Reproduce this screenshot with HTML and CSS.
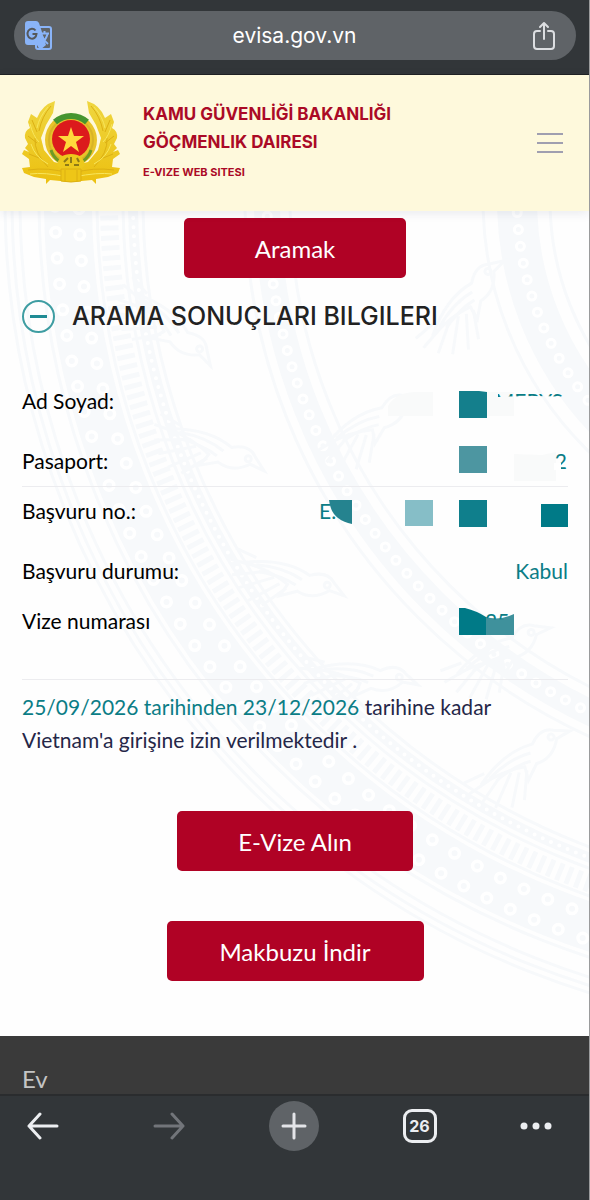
FILE: index.html
```html
<!DOCTYPE html>
<html lang="tr">
<head>
    <meta charset="UTF-8">
    <meta name="viewport" content="width=device-width, initial-scale=1.0">
    <title>evisa.gov.vn</title>
    <link rel="stylesheet" href="styles.css">
</head>
<body>

    <div class="browser-top">
        <div class="address-bar">
            <button class="icon-button translate" aria-label="Google Translate">
                <svg width="28" height="30" viewBox="0 0 28 30">
                    <rect x="11" y="6" width="15" height="22" rx="2" fill="none" stroke="#8ab4f8" stroke-width="2"/>
                    <path d="M3 0h8q2 0 3 2l2 6 5 16-6 5-3-5H3q-3 0-3-3V3q0-3 3-3z" fill="#8ab4f8"/>
                    <path d="M10.500 9.500A4.500 5 0 1 0 11.500 13H7.500" fill="none" stroke="#55585c" stroke-width="2"/>
                    <path d="M15 12.500h9M19.500 10v2.500" fill="none" stroke="#8ab4f8" stroke-width="2"/>
                    <path d="M22.500 13q-1.500 6-6 9M17 15q2 5 6 8" fill="none" stroke="#8ab4f8" stroke-width="2"/>
                </svg>
            </button>
            <span class="address">evisa.gov.vn</span>
            <button class="icon-button" aria-label="Share">
                <svg width="24" height="30" viewBox="0 0 24 30" fill="none" stroke="#dcdee1" stroke-width="2" stroke-linecap="round" stroke-linejoin="round">
                    <path d="M8 10H5q-3 0-3 3v12q0 3 3 3h14q3 0 3-3V13q0-3-3-3h-3"/>
                    <path d="M12 18V2M8 6l4-4 4 4"/>
                </svg>
            </button>
        </div>
    </div>

    <header class="site-header">
        <svg class="emblem" width="98" height="87" viewBox="0 0 98 87">
            <defs>
                <linearGradient id="gold" x1="0" y1="0" x2="0" y2="1">
                    <stop offset="0" stop-color="#efd640"/>
                    <stop offset="1" stop-color="#ecc010"/>
                </linearGradient>
                <g id="wreath">
                    <path d="M33 1Q20 5 15 18L9 14 6 22 8 28Q2 31 3 38L6 44 3 48 7 52 2 50 0 54 7 59 8 67 0 68 2 73 12 77 24 79 24 84 28 80 49 82V66L32 62 22 50 19 38 24 25 31 13z" fill="url(#gold)"/>
                    <path d="M29 6Q20 16 17 31M10 20l5 12M6 36l9 7M7 54l10 4M13 38q-1 15 13 29M6 70q20-3 41 3" fill="none" stroke="#dcb013" stroke-width="1"/>
                    <path d="M26 7Q17 17 15 28M8 24q3 12 9 18M9 44q4 13 17 20M8 74q14-2 38 3" fill="none" stroke="#f8e65c" stroke-width="1"/>
                </g>
            </defs>
            <use href="#wreath"/>
            <use href="#wreath" transform="translate(98 0) scale(-1 1)"/>
            <circle cx="49" cy="40" r="26" fill="#e9c42a"/>
            <circle cx="49" cy="40" r="22" fill="none" stroke="#d9b426" stroke-width="2"/>
            <path d="M33 22a24 24 0 0 1 32 0" fill="none" stroke="#46952f" stroke-width="6"/>
            <path d="M29 50q2 7 8 11M69 50q-2 7-8 11" fill="none" stroke="#6f9a25" stroke-width="3"/>
            <circle cx="49" cy="39" r="19" fill="#dc1a1c"/>
            <path d="M49 27l3 9 10 0-8 6 3 10-8-6-8 6 3-10-8-6 10 0z" fill="#ffd83c"/>
            <path d="M35 65q2-11 14-11t14 11l-6 6H41z" fill="#edc91c"/>
            <path d="M42 62l4-4M49 57v6M55 58l2 4M43 65h4M52 65h5" stroke="#8e7a16" stroke-width="2"/>
            <path d="M39 69h20v12q-10 2-20 0zM43 70v11M55 70v11" fill="#eec617" stroke="#dcb013"/>
        </svg>
        <div class="site-name">
            <p class="ministry">KAMU GÜVENLİĞİ BAKANLIĞI<br>GÖÇMENLIK DAIRESI</p>
            <p class="subtitle">E-VIZE WEB SITESI</p>
        </div>
        <button class="icon-button" aria-label="Menü">
            <svg width="28" height="20" viewBox="0 0 28 20" stroke="#a09fb0" stroke-width="2">
                <path d="M1 1h26M1 10h26M1 19h26"/>
            </svg>
        </button>
    </header>

    <main class="content">
        <!-- bronze drum ornament -->
        <svg class="drum" viewBox="0 0 590 825" preserveAspectRatio="xMinYMin slice" fill="none" stroke="#f7f9fb" aria-hidden="true">
            <defs>
                <g id="bird">
                    <path d="M-20 40q30-26 60-26 12-14 24-8l16 5-15 4q-8 18-26 19l-12 14 0-14q-20-2-47 6z"/>
                    <path d="M4 34L-24 58M12 36L-12 66M20 38L4 70M28 38L18 66M-6 36L-34 46M-14 30L-36 34"/>
                    <path d="M-10 36q24-14 46-14M-4 40q22-10 38-10"/>
                    <circle cx="60" cy="12" r="3"/>
                </g>
            </defs>
            <g stroke-width="3">
                <circle cx="835" cy="-11" r="830"/>
                <circle cx="835" cy="-11" r="823"/>
                <circle cx="835" cy="-11" r="815"/>
                <circle cx="835" cy="-11" r="796"/>
                <circle cx="835" cy="-11" r="738"/>
                <circle cx="835" cy="-11" r="712"/>
                <circle cx="835" cy="-11" r="692"/>
                <circle cx="835" cy="-11" r="590"/>
                <circle cx="835" cy="-11" r="545"/>
                <circle cx="835" cy="-11" r="352"/>
                <circle cx="835" cy="-11" r="285"/>
            </g>
            <circle cx="835" cy="-11" r="767" stroke-width="48"/>
            <g stroke="#fff" stroke-linecap="round">
                <circle cx="835" cy="-11" r="780" stroke-width="13" stroke-dasharray="0 26"/>
                <circle cx="835" cy="-11" r="756" stroke-width="13" stroke-dasharray="0 26"/>
            </g>
            <g stroke-linecap="round">
                <circle cx="835" cy="-11" r="780" stroke-width="6" stroke-dasharray="0 26"/>
                <circle cx="835" cy="-11" r="756" stroke-width="6" stroke-dasharray="0 26"/>
            </g>
            <circle cx="835" cy="-11" r="726" stroke-width="18" stroke-dasharray="5 5"/>
            <circle cx="835" cy="-11" r="702" stroke-width="10"/>
            <circle cx="835" cy="-11" r="702" stroke="#fff" stroke-width="4" stroke-dasharray="0 9" stroke-linecap="round"/>
            <circle cx="835" cy="-11" r="568" stroke-width="26"/>
            <circle cx="835" cy="-11" r="568" stroke="#fff" stroke-width="11" stroke-dasharray="0 17" stroke-linecap="round"/>
            <circle cx="835" cy="-11" r="568" stroke-width="5" stroke-dasharray="0 17" stroke-linecap="round"/>
            <circle cx="835" cy="-11" r="318" stroke-width="40"/>
            <circle cx="835" cy="-11" r="318" stroke="#fff" stroke-width="11" stroke-dasharray="0 17" stroke-linecap="round"/>
            <circle cx="835" cy="-11" r="318" stroke-width="5" stroke-dasharray="0 17" stroke-linecap="round"/>
            <g stroke-width="3">
                <use href="#bird" transform="translate(180 80) rotate(60)"/>
                <use href="#bird" transform="translate(210 200) rotate(40)"/>
                <use href="#bird" transform="translate(340 190) rotate(-10)"/>
                <use href="#bird" transform="translate(430 80) rotate(-30)"/>
                <use href="#bird" transform="translate(285 330) rotate(35)"/>
                <use href="#bird" transform="translate(470 420) rotate(-10)"/>
                <use href="#bird" transform="translate(350 430) rotate(25)"/>
                <use href="#bird" transform="translate(490 530) rotate(-15)"/>
            </g>
        </svg>

        <button class="btn btn-search">Aramak</button>

        <h1 class="results-title">
            <svg width="33" height="33" viewBox="0 0 33 33" fill="none" stroke="#3e9da2">
                <circle cx="16.500" cy="16.500" r="15.500" stroke-width="2"/>
                <path d="M8 16.500h17" stroke="#208b94" stroke-width="3"/>
            </svg>
            ARAMA SONUÇLARI BILGILERI
        </h1>

        <dl class="results">
            <div class="row">
                <dt>Ad Soyad:</dt>
                <dd>
                    <svg class="masked" width="250" height="40" viewBox="0 0 250 40">
                        <clipPath id="name-top"><path d="M180 5h69v10q-34-2-69 0z"/></clipPath>
                        <path d="M70 24q8-14 28-14h17v24H70zM169 10h27v24h-27z" fill="#f9fafa"/>
                        <path d="M141 9l20 0 8 1v26h-28z" fill="#147f8c"/>
                        <text class="masked-text" x="245" y="27" text-anchor="end" clip-path="url(#name-top)">MERYS</text>
                    </svg>
                </dd>
            </div>
            <div class="row row-line">
                <dt>Pasaport:</dt>
                <dd>
                    <svg class="masked" width="250" height="40" viewBox="0 0 250 40">
                        <path d="M196 12l28 1 14-3v29h-42z" fill="#f9fafa"/>
                        <path d="M141 4h28v27h-28z" fill="#4d96a1"/>
                        <text class="masked-text" x="249" y="27" text-anchor="end">2</text>
                        <path d="M236 21h7v7h-7zM243 23h7v2h-7z" fill="#fff"/>
                    </svg>
                </dd>
            </div>
            <div class="row">
                <dt>Başvuru no.:</dt>
                <dd>
                    <svg class="masked" width="250" height="40" viewBox="0 0 250 40">
                        <text class="masked-text" x="1" y="27">E.</text>
                        <path d="M11 8h23v24Q13 28 11 8z" fill="#25838f"/>
                        <path d="M87 8h28v26H87z" fill="#86bec7"/>
                        <path d="M141 8h28v27h-28z" fill="#0f7f8c"/>
                        <path d="M223 12l27 0v23h-27z" fill="#007a87"/>
                    </svg>
                </dd>
            </div>
            <div class="row">
                <dt>Başvuru durumu:</dt>
                <dd>Kabul</dd>
            </div>
            <div class="row">
                <dt>Vize numarası</dt>
                <dd>
                    <svg class="masked" width="250" height="40" viewBox="0 0 250 40">
                        <clipPath id="visa-top"><path d="M164 0h36v13q-20 8-36 2z"/></clipPath>
                        <path d="M141 6h6q12 3 21 9v18h-27z" fill="#007a87"/>
                        <path d="M168 15q13 4 28-3v21h-28z" fill="#3f919c"/>
                        <text class="masked-text" x="167" y="27" clip-path="url(#visa-top)">25</text>
                    </svg>
                </dd>
            </div>
        </dl>

        <p class="permit"><span class="permit-dates">25/09/2026 tarihinden 23/12/2026</span> tarihine kadar Vietnam'a girişine izin verilmektedir .</p>

        <button class="btn btn-visa">E-Vize Alın</button>
        <button class="btn btn-receipt">Makbuzu İndir</button>
    </main>

    <footer class="site-footer">
        <a class="footer-link" href="#">Ev</a>
    </footer>

    <nav class="browser-bottom">
        <button class="icon-button" aria-label="Back">
            <svg width="32" height="28" viewBox="0 0 32 28" fill="none" stroke="#eceef1" stroke-width="3" stroke-linecap="round" stroke-linejoin="round">
                <path d="M13 2L2 14l11 12M2 14h28"/>
            </svg>
        </button>
        <button class="icon-button" aria-label="Forward">
            <svg width="32" height="28" viewBox="0 0 32 28" fill="none" stroke="#72757a" stroke-width="3" stroke-linecap="round" stroke-linejoin="round">
                <path d="M19 2l11 12-11 12M30 14H2"/>
            </svg>
        </button>
        <button class="icon-button new-tab" aria-label="New tab">
            <svg width="26" height="28" viewBox="0 0 26 28" stroke="#e3e4e8" stroke-width="3" stroke-linecap="round">
                <path d="M13 2v24M2 14h22"/>
            </svg>
        </button>
        <button class="icon-button tab-count" aria-label="Tabs">26</button>
        <button class="icon-button more" aria-label="More">
            <svg width="32" height="8" viewBox="0 0 32 8" fill="#eceef1">
                <circle cx="4" cy="4" r="3.500"/>
                <circle cx="16" cy="4" r="3.500"/>
                <circle cx="28" cy="4" r="3.500"/>
            </svg>
        </button>
    </nav>

</body>
</html>
```
FILE: styles.css
```css
* {
    box-sizing: border-box;
}

body {
    margin: 0;
    min-height: 100vh;
    display: flex;
    flex-direction: column;
    background-color: #323639;
    border-right: 1px solid #9a9b9c;
    font-family: Lato, "Noto Sans", sans-serif;
    color: #000000;
}

button {
    font-family: inherit;
    cursor: pointer;
}

svg {
    display: block;
}

.icon-button {
    background: none;
    border: none;
    padding: 0;
}

.browser-top {
    padding: 11px 13px 14px 14px;
    background-color: #323639;
    border-bottom: 1px solid #1f2224;
}

.address-bar {
    display: flex;
    align-items: center;
    justify-content: space-between;
    height: 49px;
    padding: 0 20px 0 11px;
    border-radius: 25px;
    background-color: #5f6367;
}

.translate {
    width: 32px;
}

.address {
    font-family: Inter, sans-serif;
    font-size: 21px;
    color: #ffffff;
}

.site-header {
    position: relative;
    z-index: 1;
    display: flex;
    align-items: center;
    height: 136px;
    padding: 0 25px 0 22px;
    background-color: #fef9dc;
    box-shadow: 0 2px 10px rgba(40, 50, 90, 0.1);
}

.site-name {
    flex: 1;
    margin-left: 23px;
    padding-bottom: 4px;
    font-family: Inter, sans-serif;
    font-weight: bold;
    color: #ab0a26;
}

.site-name p {
    margin: 0;
}

.site-name .ministry {
    font-size: 17px;
    line-height: 28px;
}

.site-name .subtitle {
    margin-top: 5px;
    font-size: 11px;
    line-height: 22px;
}

.content {
    position: relative;
    overflow: hidden;
    display: flex;
    flex-direction: column;
    align-items: center;
    padding: 7px 21px 55px 22px;
    background-color: #fefefe;
}

.drum {
    position: absolute;
    top: 0;
    left: 0;
    width: 100%;
    height: 100%;
}

.content > :not(.drum) {
    position: relative;
}

.btn {
    height: 60px;
    border: none;
    border-radius: 5px;
    background-color: #b00225;
    color: #ffffff;
    font-size: 24px;
}

.btn-search {
    width: 222px;
}

.btn-visa {
    width: 236px;
    margin-top: 55px;
}

.btn-receipt {
    width: 257px;
    margin-top: 50px;
}

.results-title {
    display: flex;
    align-items: center;
    align-self: stretch;
    gap: 17px;
    margin: 18px 0 40px;
    font-family: Inter, sans-serif;
    font-size: 25px;
    font-weight: 500;
    line-height: 40px;
    color: #222222;
}

.results {
    align-self: stretch;
    margin: 0;
    padding-bottom: 33px;
    border-bottom: 1px solid #ececef;
    font-size: 21px;
    line-height: 50px;
}

.row {
    display: flex;
    align-items: center;
    justify-content: space-between;
    height: 50px;
}

.row:nth-child(2),
.row:nth-child(4) {
    margin-top: 10px;
}

.row-line {
    height: 51px;
    margin-bottom: -1px;
    border-bottom: 1px solid #ececef;
}

.row dd {
    margin: 0;
    color: #0b7d86;
}

.masked {
    margin-top: 2px;
}

.masked-text {
    font-size: 21px;
    fill: #0b7d86;
}

.permit {
    align-self: stretch;
    margin: 10px 0 0;
    font-size: 21px;
    line-height: 33px;
    color: #252748;
}

.permit-dates {
    color: #0b7d86;
}

.site-footer {
    height: 60px;
    padding: 27px 22px 0;
    background-color: #3a3a3a;
    border-bottom: 2px solid #2a2c2e;
}

.footer-link {
    font-size: 24px;
    line-height: 32px;
    color: #c4c4c4;
    text-decoration: none;
}

.browser-bottom {
    flex: 1;
    display: flex;
    align-items: flex-start;
    justify-content: space-between;
    padding: 5px 37px 0 18px;
    background-color: #323639;
}

.browser-bottom .icon-button {
    display: flex;
    align-items: center;
    justify-content: center;
    width: 50px;
    height: 50px;
}

.browser-bottom .new-tab {
    border-radius: 50%;
    background-color: #5f6367;
}

.browser-bottom .tab-count {
    width: 34px;
    height: 34px;
    margin: 8px 8px 0;
    border: 3px solid #eceef1;
    border-radius: 9px;
    font-family: Inter, sans-serif;
    font-size: 16px;
    font-weight: bold;
    color: #eceef1;
}

.browser-bottom .more {
    width: 32px;
}
```
